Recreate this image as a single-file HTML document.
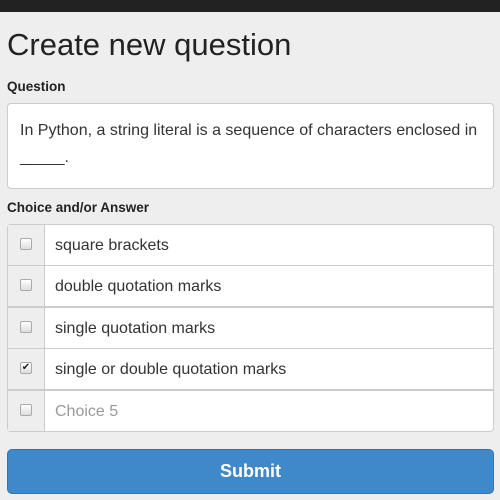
<!DOCTYPE html>
<html><head><style>
body{margin:0;background:#eeeeee;font-family:"Liberation Sans",sans-serif;color:#333;width:500px;height:500px;overflow:hidden;position:relative}
.bar{position:absolute;left:0;top:0;width:500px;height:12px;background:#222}
h1{position:absolute;left:7px;top:27px;margin:0;font-size:31px;font-weight:normal;color:#222;line-height:36px}
.lbl{position:absolute;left:7px;font-size:13.5px;font-weight:bold;color:#222}
.ta{position:absolute;left:7px;top:103px;width:485px;height:84px;background:#fff;border:1px solid #ccc;border-radius:4px;box-sizing:content-box}
.ta div{padding:13px 12px;font-size:16px;line-height:27px;color:#333}
.row{position:absolute;left:7px;width:487px;height:42px;box-sizing:border-box;border:1px solid #ccc;background:#fff}
.add{position:absolute;left:0;top:0;width:36px;height:100%;background:#eee;border-right:1px solid #ccc}
.cb{position:absolute;left:12px;top:13px;width:10px;height:10px;border:1px solid #aaa;border-radius:2px;background:linear-gradient(#fff,#ddd)}
.t{position:absolute;left:47px;top:12px;font-size:16px;color:#333}
.btn{position:absolute;left:7px;top:449px;width:487px;height:45px;background:#3f88c9;border:1px solid #3276b1;box-sizing:border-box;border-radius:5px;color:#fff;font-size:18px;font-weight:bold;text-align:center;line-height:43px}
</style></head><body>
<div class="bar"></div>
<h1>Create new question</h1>
<div class="lbl" style="top:79px">Question</div>
<div class="ta"><div>In Python, a string literal is a sequence of characters enclosed in _____.</div></div>
<div class="lbl" style="top:200px">Choice and/or Answer</div>
<div class="row" style="top:224px;border-radius:4px 4px 0 0"><div class="add"><div class="cb"></div></div><div class="t">square brackets</div></div>
<div class="row" style="top:265px"><div class="add"><div class="cb"></div></div><div class="t">double quotation marks</div></div>
<div class="row" style="top:307px"><div class="add"><div class="cb"></div></div><div class="t">single quotation marks</div></div>
<div class="row" style="top:348px"><div class="add"><div class="cb" style="font-size:10px;line-height:10px;text-align:center;color:#222">✔</div></div><div class="t">single or double quotation marks</div></div>
<div class="row" style="top:390px;border-radius:0 0 4px 4px"><div class="add"><div class="cb"></div></div><div class="t" style="color:#999">Choice 5</div></div>
<div class="btn">Submit</div>
</body></html>
